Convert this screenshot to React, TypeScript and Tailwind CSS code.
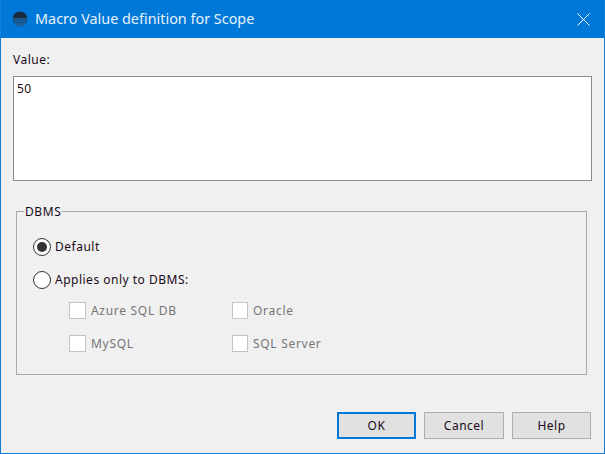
import React from 'react';

const font = { fontFamily: '"Noto Sans", "Liberation Sans", sans-serif' };

const Radio = ({ checked, label }: { checked?: boolean; label: string }) => (
  <div className="flex items-center h-[18px]">
    <span className="w-[18px] h-[18px] rounded-full border border-[#333333] bg-white flex items-center justify-center shrink-0">
      {checked && <span className="w-[10px] h-[10px] rounded-full bg-[#333333]" />}
    </span>
    <span className="ml-[4px] text-[12px] tracking-[0.5px] text-[#1a0a1a]">{label}</span>
  </div>
);

const Check = ({ label, width, box }: { label: string; width: string; box: string }) => (
  <div className={`flex items-center h-[17px] ${width}`}>
    <span className={`${box} h-[17px] border border-[#c4c4c4] bg-white shrink-0`} />
    <span className="ml-[5px] text-[12px] tracking-[0.7px] text-[#767676]">{label}</span>
  </div>
);

const Btn = ({ label, def, width }: { label: string; def?: boolean; width: string }) => (
  <button
    className={`h-[27px] ${width} bg-[#e1e1e1] text-[12px] tracking-[0.5px] text-[#1a0a1a] ${def ? 'border-2 border-[#0078d7]' : 'border border-[#adadad]'}`}
  >
    {label}
  </button>
);

export default function App() {
  return (
    <div className="w-[605px] h-[454px] flex flex-col bg-[#f0f0f0] border border-[#0f7fd9] border-t-0 overflow-hidden" style={font}>
      {/* Title bar */}
      <div className="h-[38px] -mx-px bg-[#0078d7] flex items-center shrink-0 pl-[12px] pr-[15px]">
        <svg width="16" height="16" viewBox="0 0 16 16" className="shrink-0">
          <circle cx="8" cy="8" r="7.5" fill="#1d5f96" />
          <path d="M1.2 5a7.5 7.5 0 0 1 13.6 0v2H1.2z" fill="#1a2c3c" />
          <path d="M.6 8h14.8v1.2H.6zM1.5 11h13v1H1.5z" fill="#0b4f86" />
        </svg>
        <span className="ml-[7px] text-[14.4px] text-[#e6f2fb]">Macro Value definition for Scope</span>
        <svg width="13" height="13" viewBox="0 0 13 13" className="ml-auto" fill="none" stroke="#ffffff" strokeWidth="1">
          <path d="M.5.5l12 12M12.5.5l-12 12" />
        </svg>
      </div>

      <div className="flex-1 flex flex-col pl-[12px] pr-[12px]">
        <div className="h-[38px] flex items-end pb-[7px] text-[12px] tracking-[0.5px] text-[#1a0a1a]">Value:</div>
        <div className="h-[105px] border border-[#8a8a94] bg-white px-[3px] pt-[3px] text-[12px] tracking-[0.5px] text-[#1a0a1a] shrink-0">
          50
        </div>

        {/* DBMS group */}
        <fieldset className="mt-[22px] ml-[3px] mr-[5px] h-[172px] border border-[#a9a9a9] pl-[16px] pt-[19px]">
          <legend className="-ml-[9px] px-[1px] pt-[2px] text-[12px] tracking-[0.6px] leading-[14px] text-[#1a0a1a]">DBMS</legend>
          <div className="flex flex-col gap-[15px]">
            <Radio checked label="Default" />
            <Radio label="Applies only to DBMS:" />
          </div>
          <div className="ml-[36px] mt-[13px] flex flex-col gap-[16px]">
            <div className="flex">
              <Check label="Azure SQL DB" box="w-[17px]" width="w-[163px]" />
              <Check label="Oracle" box="w-[16px]" width="w-[120px]" />
            </div>
            <div className="flex">
              <Check label="MySQL" box="w-[17px]" width="w-[163px]" />
              <Check label="SQL Server" box="w-[16px]" width="w-[120px]" />
            </div>
          </div>
        </fieldset>

        <div className="mt-auto mb-[14px] mr-[1px] flex justify-end gap-[8px]">
          <Btn label="OK" def width="w-[79px]" />
          <Btn label="Cancel" width="w-[80px]" />
          <Btn label="Help" width="w-[79px]" />
        </div>
      </div>
    </div>
  );
}
